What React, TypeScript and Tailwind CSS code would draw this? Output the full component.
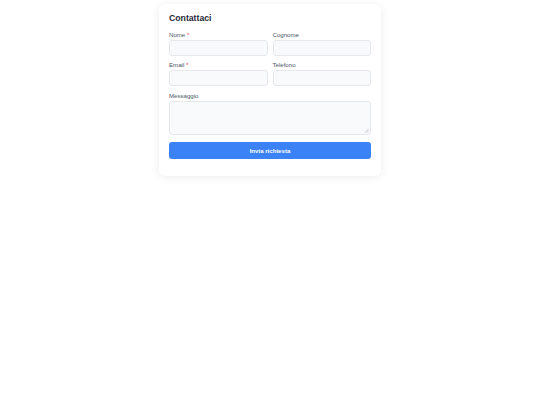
export default function App() {
  return (
    <div className="min-h-[405px] w-[540px] bg-white pt-[4px] font-['Liberation_Sans',Arial,sans-serif]">
      <div className="mx-auto w-[222px] rounded-[6px] bg-white px-[10px] pt-[9px] pb-[17px] shadow-[0_1px_8px_rgba(0,0,0,0.08)]">
        <h2 className="text-[8.7px] leading-[10px] font-bold text-[#1f2937]">Contattaci</h2>
        <div className="mt-[8px] grid grid-cols-2 gap-x-[5px] gap-y-[5px]">
          <div>
            <label className="block text-[6.1px] leading-[8px] text-[#4b5563]">
              Nome <span className="text-[#ef4444]">*</span>
            </label>
            <div className="mt-[1px] h-[16px] rounded-[3px] border border-[#e5e7eb] bg-[#f9fafb]" />
          </div>
          <div>
            <label className="block text-[6.1px] leading-[8px] text-[#4b5563]">Cognome</label>
            <div className="mt-[1px] h-[16px] rounded-[3px] border border-[#e5e7eb] bg-[#f9fafb]" />
          </div>
          <div>
            <label className="block text-[6.1px] leading-[8px] text-[#4b5563]">
              Email <span className="text-[#ef4444]">*</span>
            </label>
            <div className="mt-[1px] h-[16px] rounded-[3px] border border-[#e5e7eb] bg-[#f9fafb]" />
          </div>
          <div>
            <label className="block text-[6.1px] leading-[8px] text-[#4b5563]">Telefono</label>
            <div className="mt-[1px] h-[16px] rounded-[3px] border border-[#e5e7eb] bg-[#f9fafb]" />
          </div>
        </div>
        <div className="mt-[6px]">
          <label className="block text-[6.1px] leading-[8px] text-[#4b5563]">Messaggio</label>
          <div className="relative mt-[1px] h-[34px] rounded-[3px] border border-[#e5e7eb] bg-[#f9fafb]">
            <svg className="absolute right-[1px] bottom-[1px]" width="5" height="5" viewBox="0 0 5 5">
              <path d="M4.5 1 L1 4.5 M4.5 3 L3 4.5" stroke="#9ca3af" strokeWidth="0.6" />
            </svg>
          </div>
        </div>
        <button className="mt-[7px] flex h-[17px] w-full items-center justify-center rounded-[3px] bg-[#3b82f6] text-[6.1px] font-bold text-white">
          Invia richiesta
        </button>
      </div>
    </div>
  );
}
